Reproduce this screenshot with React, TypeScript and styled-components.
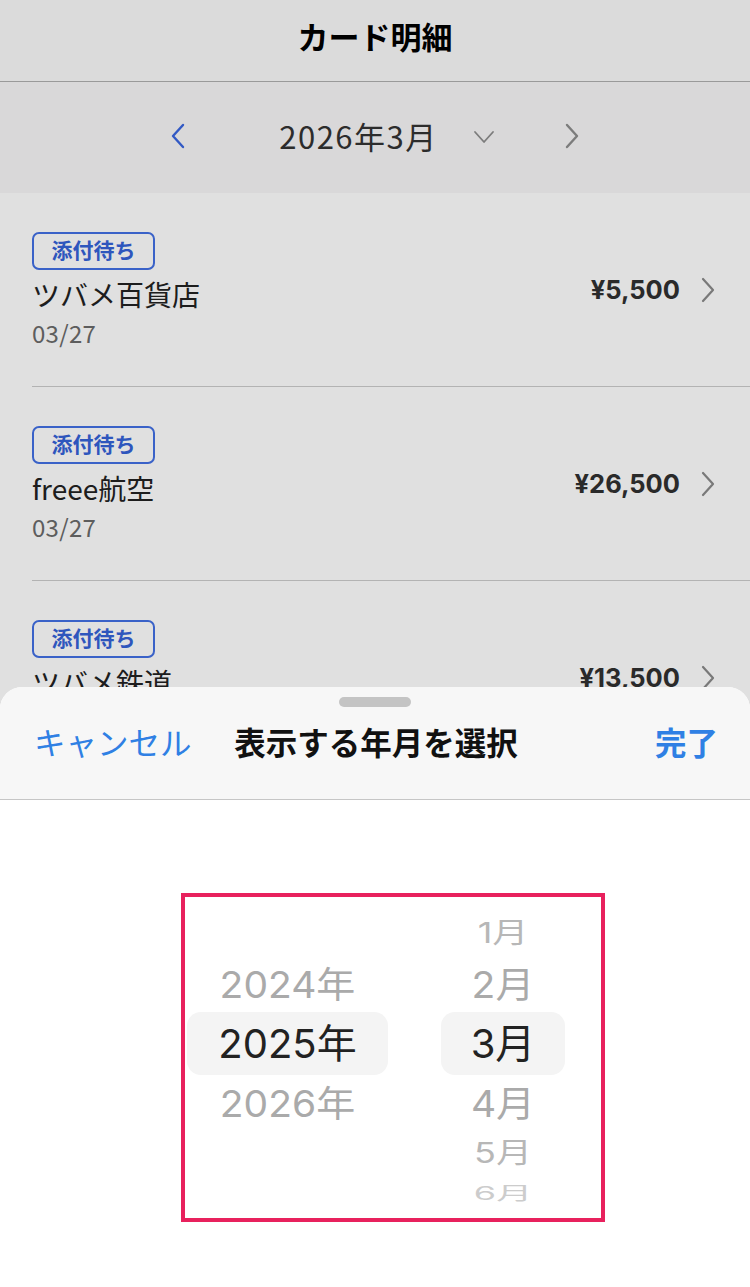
import React from "react";
import styled, { createGlobalStyle } from "styled-components";

const GlobalStyle = createGlobalStyle`
  * { box-sizing: border-box; }
  html, body { margin: 0; padding: 0; }
  body {
    font-family: "Noto Sans CJK JP", "Noto Sans", sans-serif;
    background: #ffffff;
  }
`;

const JP = `"Noto Sans CJK JP", "Noto Sans", sans-serif`;
const WHEEL = `Inter, "Noto Sans CJK JP", sans-serif`;

type Txn = { name: string; date: string; amount: string };

const txns: Txn[] = [
  { name: "ツバメ百貨店", date: "03/27", amount: "¥5,500" },
  { name: "freee航空", date: "03/27", amount: "¥26,500" },
  { name: "ツバメ鉄道", date: "03/27", amount: "¥13,500" },
];

type WheelItem = { label: string; h: number; size: number; scale: number; color: string; selected?: boolean };

const monthItems: WheelItem[] = [
  { label: "1月", h: 46, size: 36, scale: 0.78, color: "#b7b7b7" },
  { label: "2月", h: 56, size: 39, scale: 0.93, color: "#aaaaaa" },
  { label: "3月", h: 63, size: 40, scale: 1, color: "#222222", selected: true },
  { label: "4月", h: 56, size: 39, scale: 0.93, color: "#aaaaaa" },
  { label: "5月", h: 44, size: 36, scale: 0.78, color: "#b7b7b7" },
  { label: "6月", h: 30, size: 36, scale: 0.5, color: "#cccccc" },
  { label: "7月", h: 20, size: 36, scale: 0.3, color: "#e0e0e0" },
];

const yearItems: WheelItem[] = [
  { label: "", h: 46, size: 32, scale: 1, color: "transparent" },
  { label: "2024年", h: 56, size: 39, scale: 0.93, color: "#aaaaaa" },
  { label: "2025年", h: 63, size: 40, scale: 1, color: "#222222", selected: true },
  { label: "2026年", h: 56, size: 39, scale: 0.93, color: "#aaaaaa" },
];

const Chevron = ({ dir, color, w = 16, h = 26, sw = 2.4 }: { dir: "left" | "right" | "down"; color: string; w?: number; h?: number; sw?: number }) => {
  const d =
    dir === "left"
      ? `M${w - 3} 2 L3 ${h / 2} L${w - 3} ${h - 2}`
      : dir === "right"
      ? `M3 2 L${w - 3} ${h / 2} L3 ${h - 2}`
      : `M2 2 L${w / 2} ${h - 2} L${w - 2} 2`;
  return (
    <svg width={w} height={h} viewBox={`0 0 ${w} ${h}`} fill="none">
      <path d={d} stroke={color} strokeWidth={sw} strokeLinecap="round" strokeLinejoin="round" />
    </svg>
  );
};

export default function App() {
  return (
    <>
      <GlobalStyle />
      <Screen>
        <TopBar>カード明細</TopBar>
        <MonthNav>
          <NavButton>
            <Chevron dir="left" color="#3a66e0" />
          </NavButton>
          <MonthLabel>
            <span>2026年3月</span>
            <Chevron dir="down" color="#8e8e8e" w={22} h={14} sw={1.8} />
          </MonthLabel>
          <NavButton>
            <Chevron dir="right" color="#8e8e8e" />
          </NavButton>
        </MonthNav>
        <List>
          {txns.map((t) => (
            <Row key={t.name}>
              <RowMain>
                <Badge>添付待ち</Badge>
                <Name>{t.name}</Name>
                <DateText>{t.date}</DateText>
              </RowMain>
              <RowSide>
                <Amount>{t.amount}</Amount>
                <Chevron dir="right" color="#8a8a8a" w={16} h={26} sw={2.2} />
              </RowSide>
            </Row>
          ))}
        </List>
        <Dim />
        <Sheet>
          <SheetHeader>
            <Grabber />
            <SheetBar>
              <SheetAction>キャンセル</SheetAction>
              <SheetTitle>表示する年月を選択</SheetTitle>
              <SheetAction $bold $right>完了</SheetAction>
            </SheetBar>
          </SheetHeader>
          <PickerArea>
            <PickerFrame>
              <WheelColumn $width={201}>
                {yearItems.map((it, i) => (
                  <WheelCell key={i} $h={it.h} $selected={!!it.selected}>
                    <WheelText $size={it.size} $scale={it.scale} $color={it.color}>
                      {it.label}
                    </WheelText>
                  </WheelCell>
                ))}
              </WheelColumn>
              <WheelColumn $width={124}>
                {monthItems.map((it) => (
                  <WheelCell key={it.label} $h={it.h} $selected={!!it.selected}>
                    <WheelText $size={it.size} $scale={it.scale} $color={it.color}>
                      {it.label}
                    </WheelText>
                  </WheelCell>
                ))}
              </WheelColumn>
            </PickerFrame>
          </PickerArea>
        </Sheet>
      </Screen>
    </>
  );
}

const Screen = styled.div`
  position: relative;
  width: 750px;
  height: 1287px;
  overflow: hidden;
  background: #ffffff;
`;

const TopBar = styled.header`
  height: 82px;
  display: flex;
  align-items: center;
  justify-content: center;
  background: #fafafa;
  border-bottom: 1px solid #b0b0b0;
  font-family: ${JP};
  font-size: 31px;
  font-weight: 700;
  color: #000;
  padding-bottom: 10px;
`;

const MonthNav = styled.div`
  height: 111px;
  display: flex;
  align-items: center;
  justify-content: center;
  background: #f7f6f7;
  padding-bottom: 4px;
`;

const NavButton = styled.div`
  width: 90px;
  display: flex;
  justify-content: center;
  align-items: center;
`;

const MonthLabel = styled.div`
  width: 304px;
  display: flex;
  align-items: center;
  justify-content: center;
  gap: 35px;
  padding-left: 24px;
  font-family: ${JP};
  font-size: 31px;
  color: #333;
  span {
    letter-spacing: 1.5px;
    white-space: nowrap;
  }
  svg {
    margin-top: 2px;
  }
`;

const List = styled.div`
  background: #ffffff;
`;

const Row = styled.div`
  height: 194px;
  margin-left: 32px;
  padding-right: 34px;
  padding-top: 4px;
  display: flex;
  align-items: center;
  justify-content: space-between;
  border-bottom: 1px solid #cccccc;
`;

const RowMain = styled.div`
  display: flex;
  flex-direction: column;
  align-items: flex-start;
`;

const Badge = styled.span`
  height: 38px;
  width: 123px;
  display: inline-flex;
  align-items: center;
  justify-content: center;
  border: 2px solid #4270e4;
  border-radius: 7px;
  color: #3562d8;
  font-family: ${JP};
  font-size: 21px;
  font-weight: 700;
  padding-bottom: 3px;
  margin-bottom: 4px;
`;

const Name = styled.div`
  font-family: ${JP};
  font-size: 28px;
  color: #222;
  line-height: 40px;
`;

const DateText = styled.div`
  font-family: ${JP};
  font-size: 24px;
  color: #6a6a6a;
  line-height: 38px;
  letter-spacing: 0.3px;
`;

const RowSide = styled.div`
  display: flex;
  align-items: center;
  gap: 20px;
  margin-top: -4px;
`;

const Amount = styled.span`
  font-family: Inter, ${JP};
  font-size: 25.5px;
  font-weight: 700;
  color: #303030;
`;

const Dim = styled.div`
  position: absolute;
  inset: 0;
  background: rgba(0, 0, 0, 0.12);
`;

const Sheet = styled.div`
  position: absolute;
  top: 687px;
  left: 0;
  right: 0;
  bottom: 0;
  background: #ffffff;
  border-radius: 22px 22px 0 0;
  overflow: hidden;
`;

const SheetHeader = styled.div`
  height: 113px;
  background: #f7f7f7;
  border-bottom: 1px solid #c6c6c6;
  display: flex;
  flex-direction: column;
  align-items: center;
  padding-top: 10px;
`;

const Grabber = styled.div`
  width: 72px;
  height: 10px;
  border-radius: 5px;
  background: #c4c4c4;
`;

const SheetBar = styled.div`
  width: 100%;
  display: grid;
  grid-template-columns: 1fr auto 1fr;
  align-items: center;
  padding: 0 32px 0 34px;
  margin-top: 11px;
`;

const SheetAction = styled.span<{ $bold?: boolean; $right?: boolean }>`
  font-family: ${JP};
  font-size: 31.5px;
  font-weight: ${(p) => (p.$bold ? 700 : 400)};
  color: #2f80e4;
  text-align: ${(p) => (p.$right ? "right" : "left")};
`;

const SheetTitle = styled.span`
  font-family: ${JP};
  font-size: 31.5px;
  font-weight: 700;
  color: #111;
`;

const PickerArea = styled.div`
  padding: 93px 0 0 181px;
`;

const PickerFrame = styled.div`
  width: 424px;
  height: 329px;
  border: 4px solid #e8215d;
  display: flex;
  gap: 53px;
  padding: 13px 0 0 2px;
`;

const WheelColumn = styled.div<{ $width: number }>`
  width: ${(p) => p.$width}px;
  height: 300px;
  display: flex;
  flex-direction: column;
  overflow: hidden;
`;

const WheelCell = styled.div<{ $h: number; $selected: boolean }>`
  flex: 0 0 ${(p) => p.$h}px;
  display: flex;
  align-items: center;
  justify-content: center;
  border-radius: 14px;
  background: ${(p) => (p.$selected ? "#f4f4f4" : "transparent")};
`;

const WheelText = styled.span<{ $size: number; $scale: number; $color: string }>`
  font-family: ${WHEEL};
  font-size: ${(p) => p.$size}px;
  color: ${(p) => p.$color};
  transform: scaleY(${(p) => p.$scale});
  line-height: 1;
  white-space: nowrap;
`;
